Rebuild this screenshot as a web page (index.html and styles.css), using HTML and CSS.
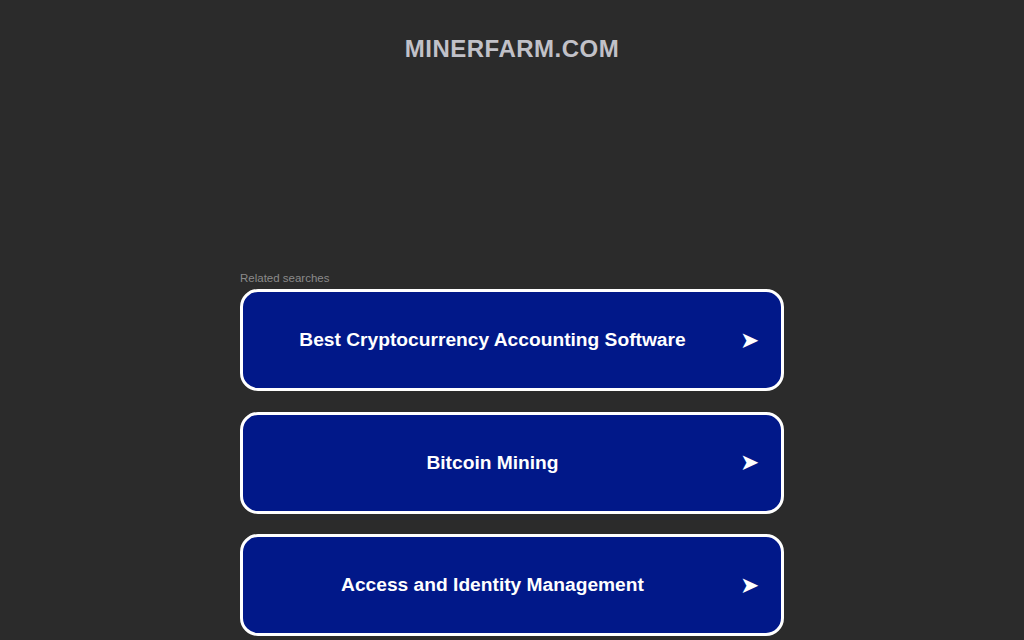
FILE: index.html
```html
<!DOCTYPE html>
<html>
<head>
<meta charset="utf-8">
<link rel="stylesheet" href="styles.css">
</head>
<body>
<div class="page">
  <header class="header"><h1 class="domain">MINERFARM.COM</h1></header>
  <main class="content">
    <div class="related">Related searches</div>
    <ul class="links">
      <li><a class="card" href="#"><span class="label">Best Cryptocurrency Accounting Software</span><span class="arrow">➤</span></a></li>
      <li><a class="card" href="#"><span class="label">Bitcoin Mining</span><span class="arrow">➤</span></a></li>
      <li><a class="card" href="#"><span class="label">Access and Identity Management</span><span class="arrow">➤</span></a></li>
    </ul>
  </main>
</div>
</body>
</html>
```
FILE: styles.css
```css
html, body {
  margin: 0;
  padding: 0;
  background: #2b2b2b;
  height: 100%;
  overflow: hidden;
}
body {
  font-family: "Liberation Sans", Arial, sans-serif;
}
.page {
  display: flex;
  flex-direction: column;
  align-items: center;
}
.header {
  padding-top: 35px;
  height: 271px;
  box-sizing: border-box;
}
.domain {
  margin: 0;
  font-size: 24px;
  font-weight: bold;
  color: #c1c1c8;
  letter-spacing: 0.5px;
  line-height: 28px;
}
.content {
  width: 544px;
}
.related {
  font-size: 11.5px;
  color: #8a8a8a;
  line-height: 14px;
  margin-top: 0;
  margin-bottom: 4px;
}
.links {
  list-style: none;
  margin: 0;
  padding: 0;
  display: flex;
  flex-direction: column;
  gap: 20.5px;
}
.card {
  display: flex;
  align-items: center;
  height: 102px;
  box-sizing: border-box;
  border: 3px solid #ffffff;
  border-radius: 18px;
  background: #011889;
  color: #ffffff;
  text-decoration: none;
  padding-left: 20px;
}
.label {
  flex: 1;
  text-align: center;
  font-size: 19.2px;
  font-weight: bold;
}
.arrow {
  width: 54px;
  text-align: center;
  font-size: 23px;
  padding-right: 5px;
}
```
